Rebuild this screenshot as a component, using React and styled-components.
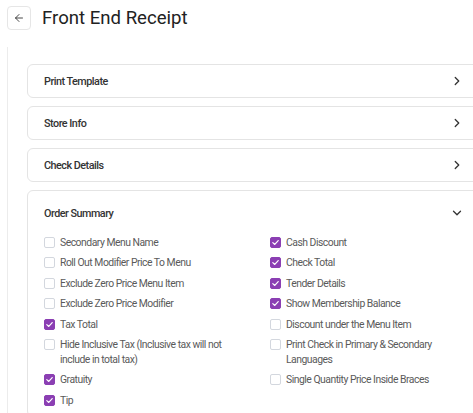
import React from "react";
import styled, { createGlobalStyle } from "styled-components";
import { ArrowLeft, ChevronRight, ChevronDown } from "lucide-react";

const Global = createGlobalStyle`
  html, body { margin: 0; padding: 0; background: #fff; overflow: hidden; }
  body { font-family: Roboto, "Liberation Sans", Arial, sans-serif; color: #222; }
  * { box-sizing: border-box; }
`;

const Header = styled.header`
  display: flex;
  align-items: flex-start;
  gap: 11px;
  padding: 6px 0 0 7px;
  height: 40px;
`;

const BackButton = styled.button`
  width: 24px;
  height: 24px;
  border: 1px solid #e6e6e6;
  border-radius: 4px;
  background: #fff;
  display: flex;
  align-items: center;
  justify-content: center;
  padding: 0;
  color: #333;
`;

const Title = styled.h1`
  margin: 0;
  font-size: 18.6px;
  font-weight: 400;
  line-height: 24px;
  color: #222;
`;

const Panel = styled.main`
  margin: 7px 0 0 7px;
  border-left: 1px solid #ececec;
  padding: 17px 0 0 19px;
  display: flex;
  flex-direction: column;
  gap: 8px;
  min-height: 400px;
`;

const Card = styled.section`
  width: 454px;
  border: 1px solid #e4e4e4;
  border-radius: 6px;
  background: #fff;
`;

const CardHeader = styled.div`
  height: ${(p) => (p.$open ? "44px" : "32px")};
  padding: 0 16px;
  display: flex;
  align-items: center;
  justify-content: space-between;
  color: #333;
`;

const CardTitle = styled.span`
  font-size: 10.8px;
  letter-spacing: -0.5px;
  font-weight: 500;
  color: #333;
`;

const Body = styled.div`
  display: grid;
  grid-template-columns: 226px 1fr;
  padding: 0 16px 8px;
`;

const Column = styled.div`
  display: flex;
  flex-direction: column;
  gap: 5.4px;
`;

const Row = styled.label`
  display: flex;
  align-items: flex-start;
  gap: 5px;
  font-size: 10.4px;
  letter-spacing: -0.5px;
  line-height: 15px;
  color: #5a5a5a;
`;

const Box = styled.span`
  flex: none;
  width: 11px;
  height: 11px;
  margin-top: 2px;
  border-radius: 2px;
  border: 1px solid ${(p) => (p.$checked ? "#8b3fb3" : "#d3d7de")};
  background: ${(p) => (p.$checked ? "#8b3fb3" : "#fff")};
  display: flex;
  align-items: center;
  justify-content: center;
`;

const Label = styled.span`
  max-width: 182px;
`;

const Check = ({ checked }) => (
  <Box $checked={checked}>
    {checked && (
      <svg width="9" height="9" viewBox="0 0 10 10">
        <path d="M2 5.2 L4.2 7.2 L8 2.8" fill="none" stroke="#fff" strokeWidth="1.3" strokeLinecap="round" strokeLinejoin="round" />
      </svg>
    )}
  </Box>
);

const left = [
  ["Secondary Menu Name", false],
  ["Roll Out Modifier Price To Menu", false],
  ["Exclude Zero Price Menu Item", false],
  ["Exclude Zero Price Modifier", false],
  ["Tax Total", true],
  ["Hide Inclusive Tax (Inclusive tax will not include in total tax)", false],
  ["Gratuity", true],
  ["Tip", true],
];

const right = [
  ["Cash Discount", true],
  ["Check Total", true],
  ["Tender Details", true],
  ["Show Membership Balance", true],
  ["Discount under the Menu Item", false],
  ["Print Check in Primary & Secondary Languages", false],
  ["Single Quantity Price Inside Braces", false],
];

const Col = ({ items }) => (
  <Column>
    {items.map(([t, c]) => (
      <Row key={t}>
        <Check checked={c} />
        <Label>{t}</Label>
      </Row>
    ))}
  </Column>
);

export default function App() {
  return (
    <>
      <Global />
      <Header>
        <BackButton aria-label="Back">
          <ArrowLeft size={12} strokeWidth={1.8} />
        </BackButton>
        <Title>Front End Receipt</Title>
      </Header>
      <Panel>
        {["Print Template", "Store Info", "Check Details"].map((t) => (
          <Card key={t}>
            <CardHeader>
              <CardTitle>{t}</CardTitle>
              <ChevronRight size={14} strokeWidth={2.2} color="#333" />
            </CardHeader>
          </Card>
        ))}
        <Card>
          <CardHeader $open>
            <CardTitle>Order Summary</CardTitle>
            <ChevronDown size={14} strokeWidth={2.2} color="#333" />
          </CardHeader>
          <Body>
            <Col items={left} />
            <Col items={right} />
          </Body>
        </Card>
      </Panel>
    </>
  );
}
